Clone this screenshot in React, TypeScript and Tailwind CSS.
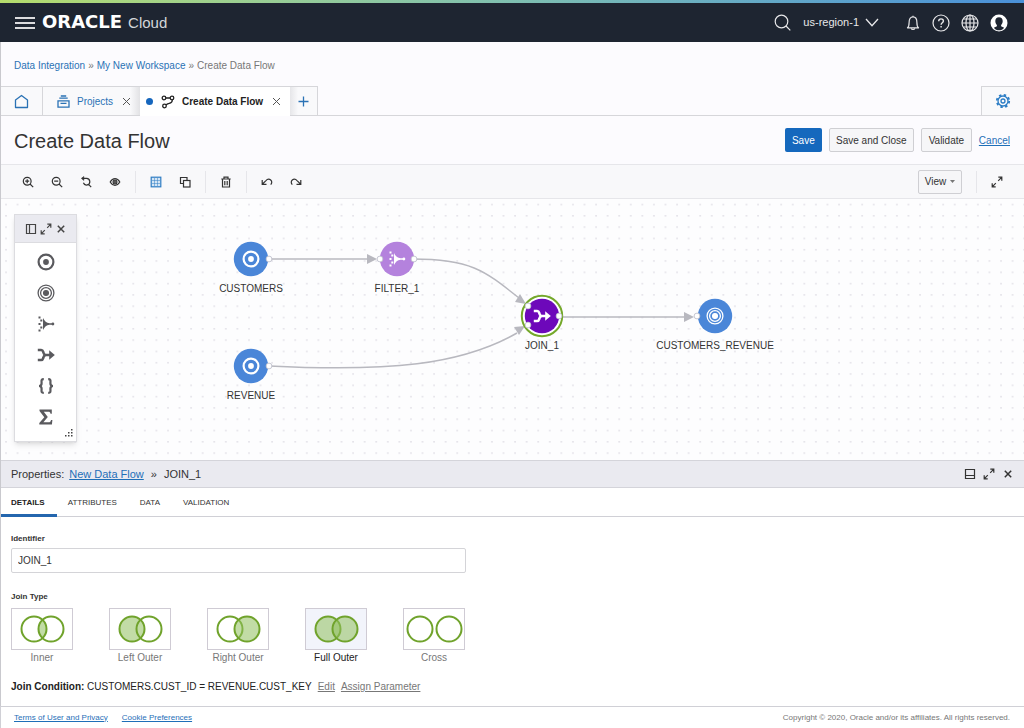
import { useState } from "react";
import type { ReactNode } from "react";

/* ---------- small icons ---------- */

type IconProps = { className?: string };

function Stroke({
  children,
  className = "h-3 w-3",
  width = 1.2,
  box = 12,
}: {
  children: ReactNode;
  className?: string;
  width?: number;
  box?: number;
}) {
  return (
    <svg
      viewBox={`0 0 ${box} ${box}`}
      fill="none"
      stroke="currentColor"
      strokeWidth={width}
      className={className}
      aria-hidden="true"
    >
      {children}
    </svg>
  );
}

const ZoomInIcon = () => (
  <Stroke>
    <circle cx="5.2" cy="5.2" r="3.9" />
    <path d="M8 8l3.2 3.2M3.2 5.2h4M5.2 3.2v4" />
  </Stroke>
);

const ZoomOutIcon = () => (
  <Stroke>
    <circle cx="5.2" cy="5.2" r="3.9" />
    <path d="M8 8l3.2 3.2M3.2 5.2h4" />
  </Stroke>
);

const ResetIcon = () => (
  <Stroke>
    <path d="M1.800 2.400h4.800a3.300 3.300 0 1 1-3.200 4.400M8.600 8.300l2.600 2.900" />
    <path d="M3.800 0.500v3.900L1.500 2.400z" fill="currentColor" strokeWidth={0.600} />
  </Stroke>
);

const EyeIcon = () => (
  <Stroke>
    <path d="M1.2 6C2.6 3.6 4.2 2.7 6 2.7S9.4 3.6 10.8 6C9.4 8.4 7.8 9.3 6 9.3S2.6 8.4 1.2 6z" />
    <circle cx="6" cy="6" r="1.9" />
    <circle cx="6" cy="6" r="0.5" />
  </Stroke>
);

const GridIcon = () => (
  <Stroke width={1.2}>
    <rect x="1.200" y="1.200" width="9.600" height="9.600" fill="#d4e5f5" />
    <path d="M4.500 2v8M7.500 2v8M2 4.500h8M2 7.500h8" strokeWidth={0.500} />
  </Stroke>
);

const CopyIcon = () => (
  <Stroke>
    <rect x="4.5" y="4.5" width="6.5" height="6.5" />
    <path d="M4.5 7.500h-3v-6h6.500v3" />
  </Stroke>
);

const TrashIcon = () => (
  <Stroke>
    <path d="M1.3 3h9.4M4 3V1.2h4V3M2.5 3v8h7V3M4.8 5v4.3M7.2 5v4.3" />
  </Stroke>
);

const UndoIcon = () => (
  <Stroke>
    <path d="M1.200 4v4.300h4.300M1.500 8l3.200-3.200C6.200 3.200 8.200 2.800 9.700 4c1.500 1.300 1.300 3.200 0 4.600" />
  </Stroke>
);

const RedoIcon = () => (
  <Stroke>
    <path d="M10.800 4v4.300H6.500M10.500 8L7.300 4.800C5.800 3.200 3.800 2.800 2.300 4 .8 5.300 1 7.200 2.300 8.600" />
  </Stroke>
);

const ExpandIcon = () => (
  <Stroke>
    <path d="M7.200 4.800l3.600-3.600M7.300 1.200h3.500v3.500M4.800 7.200l-3.600 3.600M1.200 7.300v3.500h3.500" />
  </Stroke>
);

const CloseIcon = ({ className }: IconProps) => (
  <Stroke className={className} width={1.5}>
    <path d="M2.800 2.800l6.400 6.400M9.200 2.800l-6.400 6.400" />
  </Stroke>
);

const DockLeftIcon = () => (
  <Stroke>
    <path d="M1.500 1.500h9v9h-9zM4.500 1.500v9" />
  </Stroke>
);

const DockBottomIcon = () => (
  <Stroke>
    <path d="M1.500 1.500h9v9h-9zM1.500 7.500h9" />
  </Stroke>
);

const ThinClose = () => (
  <Stroke className="h-[9px] w-[9px] text-[#555]" box={9} width={1}>
    <path d="M1 1l7 7M8 1L1 8" />
  </Stroke>
);

const HomeIcon = () => (
  <Stroke className="h-[15px] w-[15px]" box={15} width={1.300}>
    <path d="M1.500 6L7.500 1.500l6 4.500v7.500h-12z" strokeLinejoin="round" />
  </Stroke>
);

const ProjectsIcon = () => (
  <Stroke className="h-[13px] w-[13px]" box={13} width={1.300}>
    <path d="M3.800 1h5.400M2.300 3.200h8.400M1 5.800h11v6.400H1zM3.500 8.300h6" />
  </Stroke>
);

const FlowIcon = () => (
  <Stroke className="h-3.5 w-3.5 text-[#222]" box={14} width={1.3}>
    <circle cx="3" cy="3" r="1.8" />
    <circle cx="11" cy="3" r="1.8" />
    <circle cx="3.500" cy="11" r="1.8" />
    <path d="M4.800 3h4.400M11.300 4.800c.2 3.600-2.500 3.400-4 3.900-1 .4-1.600 .8-2.300 1.300" />
  </Stroke>
);

const GearIcon = () => (
  <Stroke className="h-4 w-4" box={16} width={1.3}>
    <circle cx="8" cy="8" r="5" />
    <circle cx="8" cy="8" r="2" />
    <circle cx="8" cy="8" r="6.2" strokeWidth={1.8} strokeDasharray="2.43 2.44" />
  </Stroke>
);

const SearchIcon = () => (
  <Stroke className="h-[17px] w-[17px]" box={17}>
    <circle cx="7.5" cy="7.5" r="6.300" />
    <path d="M12 12l4.300 4.300" />
  </Stroke>
);

const BellIcon = () => (
  <Stroke className="h-4 w-4" box={16}>
    <path d="M2.500 12.800c1.300-1 1.600-2 1.600-5.300 0-3.500 1.400-5.600 3.900-5.600s3.900 2.100 3.900 5.600c0 3.300.3 4.300 1.600 5.300z" strokeLinejoin="round" />
    <path d="M6.300 13.300c.3 1.600 3.100 1.600 3.400 0M8 .8v1" />
  </Stroke>
);

const HelpIcon = () => (
  <Stroke className="h-[18px] w-[18px]" box={18}>
    <circle cx="9" cy="9" r="8" />
    <path d="M6.700 7.200c0-3.200 4.700-3 4.700-.3 0 1.800-2.300 1.800-2.300 3.800M9.100 12v1.500" strokeWidth={1.400} />
  </Stroke>
);

const GlobeIcon = () => (
  <Stroke className="h-[18px] w-[18px]" box={18}>
    <circle cx="9" cy="9" r="8" />
    <ellipse cx="9" cy="9" rx="4" ry="8" />
    <path d="M9 1v16M1 9h16M2.300 5h13.400M2.300 13h13.400" />
  </Stroke>
);

const UserIcon = () => (
  <svg viewBox="0 0 18 18" className="h-[18px] w-[18px]" aria-hidden="true">
    <circle cx="9" cy="9" r="8.500" fill="#fff" />
    <path
      d="M9 3.200c2.300 0 3.700 1.500 3.700 3.800 0 1.700-.7 3-1.600 3.900v1.300l3 1.500c-1.300 1.800-3 2.600-5.100 2.600s-3.800-.8-5.100-2.600l3-1.500v-1.300C6 10 5.300 8.700 5.300 7c0-2.300 1.400-3.800 3.700-3.800z"
      fill="#1e2531"
    />
  </svg>
);

/* ---------- operator glyphs, drawn on an 18x18 box ---------- */

const SourceGlyph = () => (
  <g>
    <circle cx="9" cy="9" r="7.400" fill="none" stroke="currentColor" strokeWidth="2.200" />
    <circle cx="9" cy="9" r="2.900" fill="currentColor" />
  </g>
);

const TargetGlyph = () => (
  <g fill="none" stroke="currentColor" strokeWidth="1.300">
    <circle cx="9" cy="9" r="7.900" />
    <circle cx="9" cy="9" r="5.400" />
    <circle cx="9" cy="9" r="2.400" fill="currentColor" />
  </g>
);

const FilterGlyph = () => (
  <g fill="currentColor">
    <path d="M6 3C7.500 6 9.500 8 12.500 8.200H16v1.600h-3.500C9.500 10 7.500 12 6 15z" />
    <path d="M1.500 1.500h2v2h-2zM1.500 8h2v2h-2zM1.500 14.500h2v2h-2zM3.300 4.600h2v2h-2zM3.300 11.400h2v2h-2z" />
    <circle cx="15.900" cy="9" r="1.400" />
  </g>
);

const JoinGlyph = () => (
  <g fill="none" stroke="currentColor" strokeWidth="2.500">
    <path d="M.8 3.900h3.400c1.800 0 1.800 1.400 2.200 2.600C6.800 8 7.300 9 9 9h4.500M.8 14.100h3.400c1.800 0 1.800-1.400 2.200-2.600C6.800 10 7.300 9 9 9" />
    <path d="M12.200 4.200L17.800 9l-5.600 4.800z" fill="currentColor" stroke="none" />
  </g>
);

const BracesGlyph = () => (
  <g fill="none" stroke="currentColor" strokeWidth="2.200">
    <path d="M6.800 2.200c-3 0-2.200 2-2.200 4.100C4.600 8 4 9 2 9c2 0 2.600 1 2.600 2.700 0 2.100-.8 4.100 2.200 4.100" />
    <path d="M11.200 2.200c3 0 2.200 2 2.200 4.100 0 1.700.6 2.700 2.600 2.700-2 0-2.600 1-2.600 2.700 0 2.100.8 4.100-2.200 4.100" />
  </g>
);

const SumGlyph = () => (
  <path
    fill="currentColor"
    d="M2.500 1.500h12.300v4.200h-1.300c-.2-1.500-.8-2-2.300-2H6.800L10.800 9l-4.400 5.200h5.200c1.400 0 2.200-.8 2.400-2.300h1.400l-.5 4.600H2.300v-1.600L7.300 9.300 2.500 3z"
  />
);

/* ---------- data ---------- */

const operators = [
  { name: "Source", glyph: <SourceGlyph /> },
  { name: "Target", glyph: <TargetGlyph /> },
  { name: "Filter", glyph: <FilterGlyph /> },
  { name: "Join", glyph: <JoinGlyph /> },
  { name: "Expression", glyph: <BracesGlyph /> },
  { name: "Aggregate", glyph: <SumGlyph /> },
];

type Port = [number, number];

// x / y are the node centre on the canvas, ports are relative to a 44x44 box
const nodes: {
  name: string;
  x: number;
  y: number;
  color: string;
  glyph: ReactNode;
  ports: Port[];
  selected?: boolean;
}[] = [
  { name: "CUSTOMERS", x: 250, y: 60, color: "#4a86d8", glyph: <SourceGlyph />, ports: [[40, 22]] },
  { name: "FILTER_1", x: 396, y: 60, color: "#b482dd", glyph: <FilterGlyph />, ports: [[5, 22], [39, 22]] },
  { name: "REVENUE", x: 250, y: 167, color: "#4a86d8", glyph: <SourceGlyph />, ports: [[40, 22]] },
  { name: "JOIN_1", x: 541, y: 117, color: "#6d08ba", glyph: <JoinGlyph />, ports: [[8, 12], [8, 31], [39, 22]], selected: true },
  { name: "CUSTOMERS_REVENUE", x: 714, y: 117, color: "#4a86d8", glyph: <TargetGlyph />, ports: [[4, 22]] },
];

const joinTypes = [
  { name: "Inner", left: false, right: false, lens: true },
  { name: "Left Outer", left: true, right: false, lens: false },
  { name: "Right Outer", left: false, right: true, lens: false },
  { name: "Full Outer", left: true, right: true, lens: false },
  { name: "Cross", left: false, right: false, lens: false },
];

/* ---------- pieces ---------- */

function ToolButton({ label, children, active }: { label: string; children: ReactNode; active?: boolean }) {
  return (
    <button
      type="button"
      aria-label={label}
      className={`grid h-6 w-[29px] place-items-center ${active ? "text-[#2f7cc4]" : "text-[#333]"}`}
    >
      {children}
    </button>
  );
}

const Separator = () => <span className="mr-[5px] ml-1.5 h-[22px] w-px bg-[#e6e6ea]" />;

function Header() {
  return (
    <header>
      <div className="h-[3px] bg-linear-to-r from-[#b5dc6c] via-[#7fbfb0] to-[#4a90d9]" />
      <div className="flex h-[39px] items-center bg-[#1e2531] pr-4 pl-[15px] text-[#e8e8ea]">
        <button type="button" aria-label="Menu" className="flex w-5 flex-col gap-[3px]">
          <span className="h-0.5 bg-[#dcdcde]" />
          <span className="h-0.5 bg-[#dcdcde]" />
          <span className="h-0.5 bg-[#dcdcde]" />
        </button>
        <a href="#" className="ml-[7px] flex items-baseline gap-1.5 leading-5">
          <span className="font-['DejaVu_Sans',sans-serif] text-[18px] font-bold text-white">ORACLE</span>
          <span className="text-[15px] text-[#d4d6da]">Cloud</span>
        </a>
        <button type="button" aria-label="Search" className="ml-auto">
          <SearchIcon />
        </button>
        <button type="button" className="ml-3 flex items-center gap-1.5 text-[11px]">
          us-region-1
          <svg viewBox="0 0 14 9" className="h-[9px] w-[14px]" fill="none" stroke="currentColor" strokeWidth="1.300" aria-hidden="true">
            <path d="M1 1l6 6.800L13 1" />
          </svg>
        </button>
        <div className="ml-[26px] flex items-center gap-[11px]">
          <button type="button" aria-label="Notifications"><BellIcon /></button>
          <button type="button" aria-label="Help"><HelpIcon /></button>
          <button type="button" aria-label="Language"><GlobeIcon /></button>
          <button type="button" aria-label="Profile"><UserIcon /></button>
        </div>
      </div>
    </header>
  );
}

function TabBar() {
  return (
    <div className="flex h-[30px] border-b border-[#d6d6da] text-[10px]">
      <a href="#" aria-label="Home" className="grid w-[42px] place-items-center border-t border-r border-[#d6d6da] bg-[#f9f9fb] text-[#2a72b5]">
        <HomeIcon />
      </a>
      <div className="flex w-[97px] items-center border-t border-[#d6d6da] bg-linear-to-r from-[#f9f9fb] from-90% to-[#e2e2e5] pl-3.5 text-[#2a72b5]">
        <ProjectsIcon />
        <a href="#" className="ml-[7px]">Projects</a>
        <button type="button" aria-label="Close Projects" className="ml-[9px]"><ThinClose /></button>
      </div>
      <div className="-mb-px flex w-[150px] items-center border-t border-[#d6d6da] bg-white pl-1.5 font-bold text-[#222]">
        <span className="h-[7px] w-[7px] rounded-full bg-[#1566bd]" />
        <span className="ml-2"><FlowIcon /></span>
        <span className="ml-[7px] whitespace-nowrap">Create Data Flow</span>
        <button type="button" aria-label="Close Create Data Flow" className="ml-[9px]"><ThinClose /></button>
      </div>
      <button type="button" aria-label="New tab" className="grid w-7 place-items-center border-t border-r border-[#d6d6da] bg-linear-to-r from-[#e6e6e9] to-[#f9f9fb] to-30% text-[#2a72b5]">
        <Stroke className="h-[11px] w-[11px]" box={11} width={1.3}>
          <path d="M5.500 .5v10M.5 5.500h10" />
        </Stroke>
      </button>
      <button type="button" aria-label="Settings" className="ml-auto grid w-[43px] place-items-center border-t border-l border-[#d6d6da] bg-[#f9f9fb] text-[#2a7cc5]">
        <GearIcon />
      </button>
    </div>
  );
}

function Toolbar() {
  return (
    <div className="flex h-[35px] items-center border-y border-[#e6e6ea] bg-[#f8f8fa] pr-[13px] pl-3">
      <ToolButton label="Zoom in"><ZoomInIcon /></ToolButton>
      <ToolButton label="Zoom out"><ZoomOutIcon /></ToolButton>
      <ToolButton label="Reset zoom"><ResetIcon /></ToolButton>
      <ToolButton label="Preview"><EyeIcon /></ToolButton>
      <Separator />
      <ToolButton label="Grid guide" active><GridIcon /></ToolButton>
      <ToolButton label="Auto layout"><CopyIcon /></ToolButton>
      <Separator />
      <ToolButton label="Delete"><TrashIcon /></ToolButton>
      <Separator />
      <ToolButton label="Undo"><UndoIcon /></ToolButton>
      <ToolButton label="Redo"><RedoIcon /></ToolButton>
      <button type="button" className="mr-2 ml-auto flex h-6 w-11 items-center justify-center gap-1 rounded-xs border border-[#cfcfd3] bg-[#f6f6f8] text-[10px] text-[#333]">
        View
        <svg viewBox="0 0 5 3" className="h-[3px] w-[5px]" aria-hidden="true"><path d="M0 0h5L2.500 3z" fill="#777" /></svg>
      </button>
      <Separator />
      <ToolButton label="Full screen"><ExpandIcon /></ToolButton>
    </div>
  );
}

function Palette() {
  return (
    <div className="absolute top-[15px] left-[13px] w-[63px] border border-[#dcdce0] bg-white shadow-md">
      <div className="flex h-7 items-center justify-center gap-[3px] border-b border-[#dcdce0] bg-[#eaeaf0] text-[#444]">
        <button type="button" aria-label="Dock palette"><DockLeftIcon /></button>
        <button type="button" aria-label="Expand palette"><ExpandIcon /></button>
        <button type="button" aria-label="Close palette"><CloseIcon /></button>
      </div>
      <ul className="flex h-[198px] flex-col items-center gap-[13px] pt-2.5 text-[#5a5a5e]">
        {operators.map((op) => (
          <li key={op.name}>
            <button type="button" aria-label={op.name} className="block">
              <svg viewBox="0 0 18 18" className="h-[18px] w-[18px]" aria-hidden="true">{op.glyph}</svg>
            </button>
          </li>
        ))}
      </ul>
      <svg viewBox="0 0 8 8" className="absolute right-[3px] bottom-1 h-2 w-2" aria-hidden="true">
        <path d="M6 0h1.500v1.500H6zM3 3h1.500v1.500H3zM6 3h1.500v1.500H6zM0 6h1.500v1.500H0zM3 6h1.500v1.500H3zM6 6h1.500v1.500H6z" fill="#444" />
      </svg>
    </div>
  );
}

function Canvas() {
  return (
    <section aria-label="Data flow" className="relative h-[261px] overflow-hidden bg-[#fdfdfe]">
      <svg className="absolute inset-0 h-full w-full" aria-hidden="true">
        <defs>
          <pattern id="dots" x="4" y="0" width="11.57" height="11.3" patternUnits="userSpaceOnUse">
            <circle cx="1" cy="5.500" r="0.900" fill="#dedce4" />
          </pattern>
        </defs>
        <rect width="100%" height="100%" fill="url(#dots)" />
        <g fill="none" stroke="#b8b8bf" strokeWidth="1.500">
          <path d="M268 60h100" />
          <path d="M412 60c58 0 72 12 106 39" />
          <path d="M268 167c120 6 192 -1 248-33" />
          <path d="M562 118h122" />
        </g>
        <g fill="#b8b8bf">
          <path d="M366 55l10 5-10 5z" />
          <path d="M525 105l-11-2 5-8z" />
          <path d="M524 127l-11 1 5 8z" />
          <path d="M683 113l10 5-10 5z" />
        </g>
      </svg>

      {nodes.map((n) => (
        <div
          key={n.name}
          className="absolute flex w-0 flex-col items-center"
          style={{ left: n.x, top: n.y - 22 }}
        >
          <svg viewBox="0 0 44 44" className="h-11 w-11 shrink-0 text-white" aria-hidden="true">
            {n.selected && <circle cx="22" cy="22" r="20.2" fill="#fff" stroke="#74a82a" strokeWidth="2" />}
            <circle cx="22" cy="22" r="17.2" fill={n.color} />
            <g transform="translate(13 13)">{n.glyph}</g>
            {n.ports.map(([x, y]) => (
              <circle key={`${x}-${y}`} cx={x} cy={y} r="2.900" fill="#fff" stroke="#b9bac8" strokeWidth="0.800" />
            ))}
          </svg>
          <span className="mt-0.5 text-[10px] leading-3 whitespace-nowrap text-[#333]">{n.name}</span>
        </div>
      ))}

      <Palette />
    </section>
  );
}

function Venn({ left, right, lens, apart }: { left: boolean; right: boolean; lens: boolean; apart: boolean }) {
  const x1 = apart ? 16 : 22;
  const x2 = apart ? 45 : 39;
  return (
    <svg viewBox="0 0 60 40" className="h-10 w-[60px]" aria-hidden="true">
      <g stroke="#70a32c" strokeWidth="2" fill="#8fc05c">
        {lens && <path d="M30.500 10.800a12.500 12.500 0 0 1 0 18.400a12.500 12.500 0 0 1 0-18.400z" fillOpacity="0.55" stroke="none" />}
        <circle cx={x1} cy="20" r="12.5" fillOpacity={left ? 0.55 : 0} />
        <circle cx={x2} cy="20" r="12.5" fillOpacity={right ? 0.55 : 0} />
      </g>
    </svg>
  );
}

function Properties() {
  const [joinType, setJoinType] = useState("Full Outer");
  const [identifier, setIdentifier] = useState("JOIN_1");

  return (
    <section aria-label="Properties" className="flex-1 bg-white">
      <div className="flex h-7 items-center border-y border-[#d4d4da] bg-[#eaeaf0] px-2.5 text-[11px] text-[#333]">
        <span>Properties:</span>
        <a href="#" className="ml-[5px] text-[#1f6fb8] underline">New Data Flow</a>
        <span className="mx-[7px]">»</span>
        <span>JOIN_1</span>
        <div className="ml-auto flex gap-[7px]">
          <button type="button" aria-label="Dock panel"><DockBottomIcon /></button>
          <button type="button" aria-label="Expand panel"><ExpandIcon /></button>
          <button type="button" aria-label="Close panel"><CloseIcon /></button>
        </div>
      </div>

      <div role="tablist" className="flex h-[29px] border-b border-[#d0d0d6] text-[8px] text-[#333]">
        <button type="button" role="tab" aria-selected="true" className="-mb-px border-b-[3px] border-[#2466ae] pt-1 pr-3 pl-2.5 font-bold text-[#222]">DETAILS</button>
        <button type="button" role="tab" aria-selected="false" className="pt-0.5 pr-3 pl-[11px]">ATTRIBUTES</button>
        <button type="button" role="tab" aria-selected="false" className="pt-0.5 pr-3 pl-[11px]">DATA</button>
        <button type="button" role="tab" aria-selected="false" className="pt-0.5 pr-3 pl-[11px]">VALIDATION</button>
      </div>

      <form className="px-2.5 pt-4 text-[10px]" onSubmit={(e) => e.preventDefault()}>
        <label htmlFor="identifier" className="block text-[8px] leading-3 font-bold text-[#333]">Identifier</label>
        <input
          id="identifier"
          value={identifier}
          onChange={(e) => setIdentifier(e.target.value)}
          className="mt-[3px] block h-[25px] w-[455px] max-w-full rounded-xs border border-[#d4d4d8] bg-white px-1.5 text-[#333]"
        />

        <fieldset className="mt-[18px]">
          <legend className="text-[8px] leading-3 font-bold text-[#333]">Join Type</legend>
          <div className="mt-[5px] flex gap-9">
            {joinTypes.map((t) => (
              <label key={t.name} className={`flex w-[62px] flex-col items-center ${t.name === joinType ? "text-[#222]" : "text-[#777]"}`}>
                <input
                  type="radio"
                  name="join-type"
                  className="sr-only"
                  checked={t.name === joinType}
                  onChange={() => setJoinType(t.name)}
                />
                <span className={`border border-[#cfcbd4] ${t.name === joinType ? "bg-[#f2f4fb]" : "bg-white"}`}>
                  <Venn left={t.left} right={t.right} lens={t.lens} apart={t.name === "Cross"} />
                </span>
                <span className="mt-0.5 leading-3 whitespace-nowrap">{t.name}</span>
              </label>
            ))}
          </div>
        </fieldset>

        <p className="mt-[17px] mb-3 leading-3 text-[#222]">
          <b>Join Condition:</b> CUSTOMERS.CUST_ID = REVENUE.CUST_KEY
          <a href="#" className="ml-1.5 text-[#777] underline">Edit</a>
          <a href="#" className="ml-1.5 text-[#777] underline">Assign Parameter</a>
        </p>
      </form>
    </section>
  );
}

export default function App() {
  return (
    <div className="flex min-h-screen flex-col bg-[#fcfbfe] font-['Liberation_Sans',Arial,sans-serif] text-[#333]">
      <Header />
      <main className="flex flex-1 flex-col border-l border-[#c9c9ce]">
        <nav aria-label="Breadcrumb" className="flex h-11 items-center gap-[3px] pt-0.5 pl-[13px] text-[10px] text-[#777]">
          <a href="#" className="text-[#2a72b5]">Data Integration</a>
          <span>»</span>
          <a href="#" className="text-[#2a72b5]">My New Workspace</a>
          <span>»</span>
          <span>Create Data Flow</span>
        </nav>
        <TabBar />
        <div className="flex h-12 items-center pr-3.5 pl-[13px] text-[10px]">
          <h1 className="pt-0.5 text-xl">Create Data Flow</h1>
          <button type="button" className="ml-auto h-6 w-[37px] rounded-xs bg-[#1568bd] text-white">Save</button>
          <button type="button" className="ml-[7px] h-6 w-[85px] rounded-xs border border-[#cfcfd3] bg-[#f6f6f8]">Save and Close</button>
          <button type="button" className="mx-[7px] h-6 w-[51px] rounded-xs border border-[#cfcfd3] bg-[#f6f6f8]">Validate</button>
          <a href="#" className="text-[#1f6fb8] underline">Cancel</a>
        </div>
        <Toolbar />
        <Canvas />
        <Properties />
      </main>
      <footer className="flex h-[22px] items-center gap-3.5 border-t border-l border-[#d0d0d6] bg-white pr-3.5 pl-[13px] text-[8px] text-[#777]">
        <a href="#" className="text-[#1f6fb8] underline">Terms of User and Privacy</a>
        <a href="#" className="text-[#1f6fb8] underline">Cookie Preferences</a>
        <span className="ml-auto">Copyright © 2020, Oracle and/or its affiliates. All rights reserved.</span>
      </footer>
    </div>
  );
}
